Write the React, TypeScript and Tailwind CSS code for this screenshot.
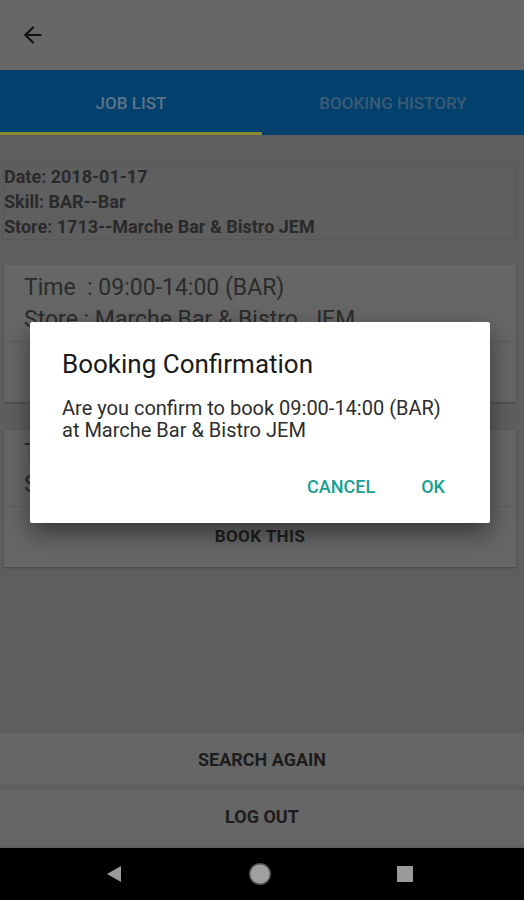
import { ArrowLeft } from "lucide-react";

const font = { fontFamily: "Roboto, 'Noto Sans', sans-serif" };

function JobCard({ time, store }: { time: string; store: string }) {
  return (
    <div className="ml-1 mr-2 bg-[#666666] shadow-[0_1px_2px_rgba(0,0,0,0.25)]">
      <div className="border-b border-[#5c5c5c] px-5 pt-[7px] pb-[5px] text-[23px] leading-8 text-[#2b2b2b]">
        <div className="whitespace-pre">{time}</div>
        <div className="whitespace-pre">{store}</div>
      </div>
      <div className="flex h-[60px] items-center justify-center text-[17px] font-bold tracking-wide text-[#1f1f1f]">
        BOOK THIS
      </div>
    </div>
  );
}

export default function App() {
  return (
    <div style={font} className="relative flex h-[900px] w-[524px] flex-col overflow-hidden bg-[#5e5e5f]">
      <header className="flex h-[70px] items-center bg-[#676767] px-5">
        <ArrowLeft size={26} strokeWidth={2} className="text-[#111]" />
      </header>

      <nav className="flex h-[65px] bg-[#02416e]">
        <div className="flex flex-1 flex-col">
          <div className="flex flex-1 items-center justify-center pt-[6px] text-[17px] font-medium text-[#5e7386]">
            JOB LIST
          </div>
          <div className="h-[3px] bg-[#8a8a2c]" />
        </div>
        <div className="flex flex-1 items-center justify-center pt-[3px] text-[17px] font-medium text-[#3d5a74]">
          BOOKING HISTORY
        </div>
      </nav>

      <section className="ml-[3px] mr-2 mt-[28px] border border-[#595959] bg-[#5f5f60] text-[18px] font-bold leading-[25px] text-[#2a2a2a]">
        <div>Date: 2018-01-17</div>
        <div>Skill: BAR--Bar</div>
        <div>Store: 1713--Marche Bar &amp; Bistro JEM</div>
      </section>

      <div className="mt-[25px] flex flex-col gap-[28px]">
        <JobCard time="Time  : 09:00-14:00 (BAR)" store="Store : Marche Bar & Bistro  JEM" />
        <JobCard time="Time  : 14:00-19:00 (BAR)" store="Store : Marche Bar & Bistro  JEM" />
      </div>

      <div className="flex-1" />

      <div className="flex flex-col gap-[5px] pb-[2px]">
        <button className="h-[52px] bg-[#666666] text-[18px] font-bold text-[#1c1c1c]">SEARCH AGAIN</button>
        <button className="h-[56px] bg-[#666666] pb-[3px] text-[18px] font-bold text-[#1c1c1c]">LOG OUT</button>
      </div>

      <footer className="flex h-[52px] items-center justify-between bg-black pl-[106px] pr-[111px]">
        <svg width="16" height="18" viewBox="0 0 16 18">
          <path d="M15 1 L1 9 L15 17 Z" fill="#9a9a9a" />
        </svg>
        <svg width="24" height="24" viewBox="0 0 24 24">
          <circle cx="12" cy="12" r="11" fill="#555" />
          <circle cx="12" cy="12" r="9.5" fill="#a0a0a0" />
        </svg>
        <div className="h-[16px] w-[16px] bg-[#9a9a9a]" />
      </footer>

      <div className="absolute left-[30px] top-[322px] w-[460px] rounded-[2px] bg-white px-8 pt-[26px] pb-[25px] shadow-[0_10px_24px_rgba(0,0,0,0.45)]">
        <h2 className="text-[26px] leading-8 text-[#1a1a1a]">Booking Confirmation</h2>
        <p className="mt-[17px] text-[20px] leading-[22px] text-[#2e2e2e]">
          Are you confirm to book 09:00-14:00 (BAR) at Marche Bar &amp; Bistro JEM
        </p>
        <div className="mt-[35px] flex justify-end gap-[46px] pr-[13px] text-[18px] font-medium leading-[22px] text-[#169f92]">
          <span>CANCEL</span>
          <span>OK</span>
        </div>
      </div>
    </div>
  );
}
